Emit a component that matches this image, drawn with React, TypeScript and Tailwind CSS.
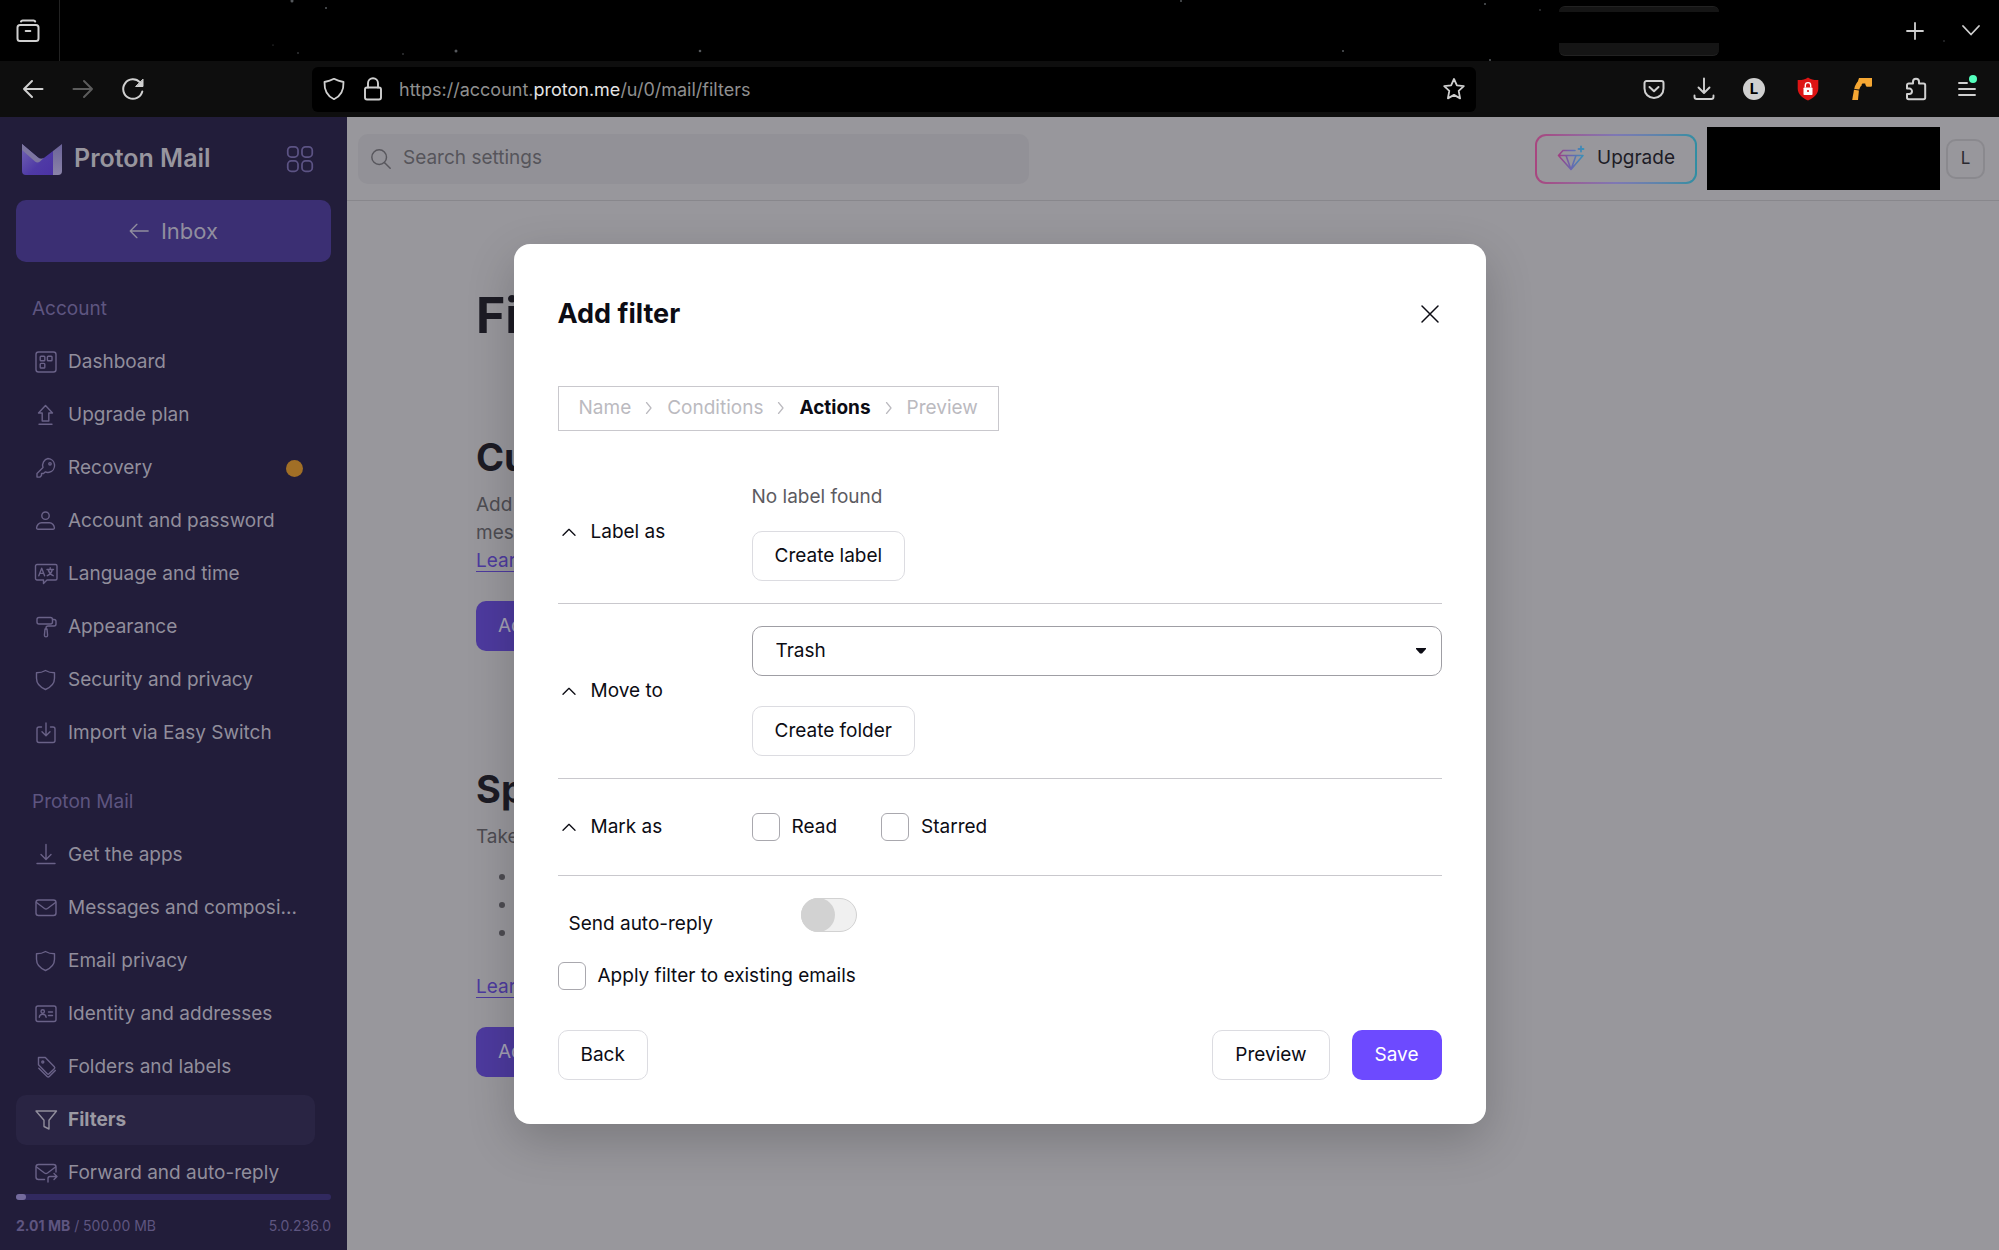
import { useState, type ReactNode } from 'react'

type IconProps = { children: ReactNode; className?: string }

// Every line icon is drawn on the same 24px grid
function Icon({ children, className = 'w-6 h-6' }: IconProps) {
  return (
    <svg
      className={`${className} shrink-0`}
      viewBox="0 0 24 24"
      fill="none"
      stroke="currentColor"
      strokeWidth="1.4"
      strokeLinecap="round"
      strokeLinejoin="round"
      aria-hidden="true"
    >
      {children}
    </svg>
  )
}

const icons: Record<string, ReactNode> = {
  dashboard: (
    <>
      <rect x="2" y="2" width="20" height="20" rx="2.5" />
      <rect x="6.2" y="6.2" width="4.6" height="4.6" rx=".8" />
      <rect x="13.4" y="6.2" width="4.6" height="4.6" rx=".8" />
      <rect x="6.2" y="13.4" width="4.6" height="4.6" rx=".8" />
    </>
  ),
  upgrade: <path d="M11.5 2.5L4.5 10h3.7v8h6.6v-8h3.7zM5 21.3h13" />,
  key: (
    <>
      <path d="M14 2.5a7 7 0 0 1 1.2 13.8c-1.4.3-2.8.1-4-.4L9.500 17.500H7.500v2l-1.500 1.600H3v-3.600l6-6A7 7 0 0 1 14 2.500z" />
      <circle cx="16" cy="7.8" r="1.2" />
    </>
  ),
  user: (
    <>
      <circle cx="11.5" cy="6.7" r="3.7" />
      <path d="M7.500 13.700h8c2.600 0 4.600 2.600 4.900 5 .1.900-.5 1.600-1.400 1.600H4c-.9 0-1.500-.7-1.400-1.600.3-2.400 2.300-5 4.900-5z" />
    </>
  ),
  language: (
    <>
      <path d="M3 2.500h18.500a1.500 1.500 0 0 1 1.500 1.500v12.500a1.500 1.500 0 0 1-1.500 1.500H13l-3.500 3.500V18H3a1.500 1.500 0 0 1-1.500-1.500V4A1.500 1.500 0 0 1 3 2.500z" />
      <path d="M4.800 13.800L7.700 6.200l2.900 7.600M5.800 11.400h3.800M13 7.500h6.500M16.200 5.800v1.700M18.300 7.500c-.6 3-2.300 5-5 6.200M14.200 7.500c.7 3 2.400 5 5 6.200" />
    </>
  ),
  roller: (
    <>
      <rect x="3" y="2.5" width="15.5" height="6.5" rx="2" />
      <path d="M18.500 4.500h1.500a2 2 0 0 1 2 2V9a2 2 0 0 1-2 2h-6a2 2 0 0 0-2 2v1" />
      <path d="M11 14h2l.6 6.300a1.600 1.600 0 0 1-3.200 0z" />
    </>
  ),
  shield: <path d="M11.500 2.500c2.800 1.700 5.800 2.300 9 2.300v5.500c0 5-3.700 9-9 11.200-5.300-2.200-9-6.200-9-11.200V4.800c3.200 0 6.200-.6 9-2.300z" />,
  importBox: <path d="M7.500 6H5a2 2 0 0 0-2 2v11.500a2 2 0 0 0 2 2h14a2 2 0 0 0 2-2V8a2 2 0 0 0-2-2h-2.500M12 2v12.500M8 10.800l4 4 4-4" />,
  download: <path d="M12 1.500v14.800M7 11.500l5 5 5-5M3 20.500h18" />,
  mail: (
    <>
      <rect x="2" y="4" width="20" height="15.5" rx="2.5" />
      <path d="M2.500 6.500l8 6c1 .7 2 .7 3 0l8-6" />
    </>
  ),
  idCard: (
    <>
      <rect x="2" y="4" width="20" height="15.5" rx="2" />
      <circle cx="8.7" cy="9.5" r="1.7" />
      <path d="M5.300 15.300c.2-2 1.500-3 3.400-3s3.200 1 3.400 3M14.500 10h4M14.500 13.500h4" />
    </>
  ),
  tags: (
    <>
      <path d="M4.500 2.500h6.800l9 9.300c.6.600.6 1.300 0 1.900l-5.200 5.100c-.6.600-1.300.6-1.900 0L4.500 9.800z" />
      <circle cx="8.8" cy="7" r="1" />
      <path d="M4.800 13.200l8.300 8.200c.7.700 1.500.7 2.200 0l6-6" />
    </>
  ),
  filter: <path d="M2 3h20.500L15 12.300V21l-5-2.500v-6.200z" />,
  forward: (
    <>
      <path d="M10.500 18.500h-6A2.500 2.500 0 0 1 2 16V6a2.500 2.500 0 0 1 2.500-2.500h15A2.500 2.500 0 0 1 22 6v5" />
      <path d="M2.500 6l8 6c1 .7 2 .7 3 0l8-6M14 21v-3.500a2 2 0 0 1 2-2h6.500M20 12.500l3 3-3 3" />
    </>
  ),
}

const accountLinks = [
  { icon: 'dashboard', label: 'Dashboard' },
  { icon: 'upgrade', label: 'Upgrade plan' },
  { icon: 'key', label: 'Recovery', warning: true },
  { icon: 'user', label: 'Account and password' },
  { icon: 'language', label: 'Language and time' },
  { icon: 'roller', label: 'Appearance' },
  { icon: 'shield', label: 'Security and privacy' },
  { icon: 'importBox', label: 'Import via Easy Switch' },
]

const mailLinks = [
  { icon: 'download', label: 'Get the apps' },
  { icon: 'mail', label: 'Messages and composi...' },
  { icon: 'shield', label: 'Email privacy' },
  { icon: 'idCard', label: 'Identity and addresses' },
  { icon: 'tags', label: 'Folders and labels' },
  { icon: 'filter', label: 'Filters', active: true },
  { icon: 'forward', label: 'Forward and auto-reply' },
]

function TabStrip() {
  return (
    <div className="relative flex h-[61px] items-center overflow-hidden bg-black text-[#d0d0d0]">
      {/* starry theme backdrop */}
      <svg className="absolute inset-0 h-full w-full" fill="#55585c" aria-hidden="true">
        <circle cx="292" cy="1" r="1.5" />
        <circle cx="326" cy="8" r="1" />
        <circle cx="456" cy="51" r="1.5" />
        <circle cx="298" cy="53" r=".8" />
        <circle cx="273" cy="45" r=".6" />
        <circle cx="403" cy="54" r=".8" />
        <circle cx="700" cy="51" r="1.3" />
        <circle cx="1181" cy="1" r="1" />
        <circle cx="1343" cy="51" r="1" />
        <circle cx="1485" cy="4" r="1" />
        <circle cx="1490" cy="60" r="1" />
        <circle cx="1540" cy="10" r=".8" />
        <circle cx="1944" cy="41" r=".7" />
      </svg>
      <div className="relative flex h-full w-[60px] items-center border-r border-[#222222]">
        <button type="button" aria-label="Tab overview" className="ml-4">
          <Icon>
            <g strokeWidth="2">
              <path d="M5 2.500c.3-.7.900-1 1.600-1h11c.7 0 1.300.3 1.600 1" />
              <rect x="1.5" y="6" width="21" height="16" rx="2.5" />
              <path d="M9.700 12h4.600" />
            </g>
          </Icon>
        </button>
      </div>
      <div className="relative mr-[184px] ml-auto flex h-[50px] w-40 flex-col justify-between">
        <div className="h-1.5 rounded-t-md border-t border-[#222222] bg-[#151515]" />
        <div className="h-[13px] rounded-b-md border-b border-[#222222] bg-[#151515]" />
      </div>
      <button type="button" aria-label="New tab" className="relative mr-8">
        <Icon><path strokeWidth="1.8" d="M12 4v16M4 12h16" /></Icon>
      </button>
      <button type="button" aria-label="List all tabs" className="relative mr-4">
        <Icon><path strokeWidth="1.8" d="M4 7l8 8.500L20 7" /></Icon>
      </button>
    </div>
  )
}

function BrowserBar() {
  const cell = 'flex h-full w-[50px] items-center justify-center'
  const wideCell = 'flex h-full w-[54px] items-center justify-center'
  return (
    <div className="flex h-14 items-center bg-[#0e0e0e] pr-2 pl-2 text-[#d0d0d0]">
      <button type="button" aria-label="Back" className={cell}>
        <Icon><path strokeWidth="2" d="M21.500 12H3M11 4l-8 8 8 8" /></Icon>
      </button>
      <button type="button" aria-label="Forward" className={`${cell} text-[#5c5c5c]`}>
        <Icon><path strokeWidth="2" d="M2.500 12H21M13 4l8 8-8 8" /></Icon>
      </button>
      <button type="button" aria-label="Reload" className={cell}>
        <Icon>
          <path strokeWidth="2" d="M21.300 14.500A9.700 9.700 0 1 1 19 5.400" />
          <path strokeWidth="1" fill="currentColor" d="M22 2.500v7h-7z" />
        </Icon>
      </button>
      <div className="ml-[154px] flex h-[45px] flex-1 items-center rounded-md bg-black pr-2.5 pl-2.5">
        <Icon>
          <path strokeWidth="1.8" d="M12 1.800c3 1.600 6 2.500 9.500 3.200.3 7.500-2.500 14-9.500 17.200C5 19 2.200 12.500 2.500 5 6 4.300 9 3.400 12 1.800z" />
        </Icon>
        <Icon className="ml-[15px] w-6 h-6">
          <g strokeWidth="1.9">
            <rect x="4" y="10.5" width="16" height="12" rx="2" />
            <path d="M7 10.500V6.200a5 5 0 0 1 10 0v4.300" />
          </g>
        </Icon>
        <p className="ml-3.5 flex-1 text-[18px] text-[#8f8f8f]">
          https://account.<span className="text-[#e4e4e4]">proton.me</span>/u/0/mail/filters
        </p>
        <button type="button" aria-label="Bookmark this page">
          <Icon>
            <path strokeWidth="1.8" d="M12 2l2.900 6.300 6.900.8-5.100 4.700 1.400 7.600-6.100-3.500-6.100 3.500 1.400-7.600-5.100-4.700 6.900-.8z" />
          </Icon>
        </button>
      </div>
      <div className="ml-[153px] flex h-full">
        <button type="button" aria-label="Save to Pocket" className={cell}>
          <Icon>
            <path strokeWidth="2" d="M4.500 4h15a2 2 0 0 1 2 2v5.500a9.500 9.500 0 0 1-19 0V6a2 2 0 0 1 2-2z" />
            <path strokeWidth="2" d="M7.500 10l4.500 4.300 4.500-4.300" />
          </Icon>
        </button>
        <button type="button" aria-label="Downloads" className={cell}>
          <Icon><path strokeWidth="1.9" d="M12 1.500v14M6.500 10.500l5.500 5.500 5.500-5.500M2.500 18.500v1.200c0 1.300.9 2.300 2.200 2.300h14.600c1.300 0 2.200-1 2.200-2.300v-1.200" /></Icon>
        </button>
        <button type="button" aria-label="Account" className={cell}>
          <span className="flex h-[22px] w-[22px] items-center justify-center rounded-full bg-[#cfcfcf] text-[15px] font-bold text-black">L</span>
        </button>
        <div className="flex h-full pl-0.5">
          <button type="button" aria-label="Password manager" className={wideCell}>
            <svg className="h-6 w-6" viewBox="0 0 24 24" aria-hidden="true">
              <path fill="#dd1414" d="M12 .5c3 2 6.500 2.700 10.300 2.500v8.500c0 5.500-4.300 9.300-10.300 12-6-2.700-10.300-6.500-10.300-12V3C5.500 3.200 9 2.500 12 .5z" />
              <rect x="7.5" y="10.5" width="9" height="7.5" rx=".8" fill="#fff" />
              <path d="M9.300 10.500V8.300a2.700 2.700 0 0 1 5.400 0v2.200" fill="none" stroke="#fff" strokeWidth="1.4" />
              <circle cx="12" cy="14" r="1.1" fill="#dd1414" />
            </svg>
          </button>
          <button type="button" aria-label="Extension" className={wideCell}>
            <svg className="h-6 w-6" viewBox="0 0 24 24" fill="#f5a733" aria-hidden="true">
              <path d="M9 1h13v7.500c0 .8-.6 1.300-1.400 1.300h-4L15.500 8l-.3-1.400h-2.700c-.8 1.300-1.800 2-3.200 2.400L7 7z" />
              <path d="M8 4.500l4 3.500c-1.400 1.200-2.200 2.700-2.700 4.500L4.300 12c.4-3 1.700-5.500 3.700-7.500z" />
              <path d="M4 12.700l4.900.7-.9 9.600H2.200z" />
            </svg>
          </button>
          <button type="button" aria-label="Extensions" className={wideCell}>
            <Icon>
              <path strokeWidth="2" d="M9 6.500V4.800a3 3 0 0 1 6 0v1.700h4.500a1.700 1.700 0 0 1 1.700 1.700v12.300a1.700 1.700 0 0 1-1.700 1.700H4.700A1.700 1.700 0 0 1 3 20.500V17h2.300a2.700 2.700 0 0 0 0-5.400H3V8.200a1.700 1.700 0 0 1 1.700-1.700z" />
            </Icon>
          </button>
        </div>
        <button type="button" aria-label="Application menu" className="flex h-full w-12 items-center justify-center">
          <span className="relative">
            <Icon><path strokeWidth="1.9" d="M4 6h8M4 12h16M4 18h16" /></Icon>
            <span className="absolute -top-0.5 right-0.5 h-2 w-2 rounded-full bg-[#54ffbd]" />
          </span>
        </button>
      </div>
    </div>
  )
}

type NavItem = { icon: string; label: string; warning?: boolean; active?: boolean }

function NavSection({ title, items }: { title: string; items: NavItem[] }) {
  return (
    <section className="flex flex-col gap-[3px]">
      <h2 className="flex h-[50px] items-center pl-4 text-[19px] text-[#5e5580]">{title}</h2>
      {items.map((item) => (
        <a
          key={item.label}
          href="#"
          className={`flex h-[50px] items-center gap-2.5 rounded-[10px] pr-3 pl-[18px] text-[19px] ${
            item.active ? 'bg-[#292443] font-bold text-[#9b99a2]' : 'text-[#918e9c]'
          }`}
        >
          <span className={item.active ? 'text-[#918e9c]' : 'text-[#6a6288]'}>
            <Icon>{icons[item.icon]}</Icon>
          </span>
          <span className="flex-1 whitespace-nowrap">{item.label}</span>
          {item.warning && <span className="h-[17px] w-[17px] rounded-full bg-[#a16f26]" />}
        </a>
      ))}
    </section>
  )
}

function Sidebar() {
  return (
    <aside className="flex w-[347px] shrink-0 flex-col bg-[#221d3a] pr-4 pl-4">
      <div className="flex h-[83px] shrink-0 items-center pr-[17px] pl-[6px]">
        <svg className="h-8 w-10" viewBox="0 0 40 32" aria-hidden="true">
          <defs>
            <linearGradient id="mailBody" x1="0" y1="0" x2="1" y2="1">
              <stop offset="0" stopColor="#7466b4" />
              <stop offset=".6" stopColor="#4f3aa6" />
              <stop offset="1" stopColor="#4b32a4" />
            </linearGradient>
            <linearGradient id="mailFlap" x1="0" y1="0" x2="0" y2="1">
              <stop offset="0" stopColor="#6b6399" />
              <stop offset="1" stopColor="#8a83a8" />
            </linearGradient>
          </defs>
          <path d="M0 1l16 13.500c2 1.700 4.500 1.700 6.500 0L31 8v24H4a4 4 0 0 1-4-4z" fill="url(#mailBody)" />
          <path d="M31 8l9-7v27a4 4 0 0 1-4 4h-5z" fill="url(#mailFlap)" />
          <path d="M0 1l16 13.500c2 1.700 4 1.700 6 .3L18 18.500c-1.500 1.300-3.500 1.300-5 0L0 7z" fill="#7d76a0" />
        </svg>
        <p className="ml-3 text-[25px] font-semibold text-[#97959e]">Proton Mail</p>
        <button type="button" aria-label="Proton applications" className="ml-auto text-[#5c5384]">
          <Icon className="w-7 h-7">
            <g strokeWidth="1.5">
              <rect x="1.5" y="1.5" width="8.8" height="8.8" rx="3" />
              <rect x="13.7" y="1.5" width="8.8" height="8.8" rx="3" />
              <rect x="1.5" y="13.7" width="8.8" height="8.8" rx="3" />
              <rect x="13.7" y="13.7" width="8.8" height="8.8" rx="3" />
            </g>
          </Icon>
        </button>
      </div>
      <button type="button" className="flex h-[62px] shrink-0 items-center justify-center gap-3 rounded-[10px] bg-[#3b2f73] text-[22px] text-[#918e9f]">
        <Icon className="w-5 h-5"><path strokeWidth="1.6" d="M23 12H1.500M9.500 4l-8 8 8 8" /></Icon>
        Inbox
      </button>
      <nav className="mt-[22px] mr-4 flex min-h-0 flex-1 flex-col gap-[19px] overflow-hidden">
        <NavSection title="Account" items={accountLinks} />
        <NavSection title="Proton Mail" items={mailLinks} />
      </nav>
      <div className="mt-2.5 h-1.5 shrink-0 rounded-full bg-[#31295f]">
        <div className="h-full w-2.5 rounded-full bg-[#746b9d]" />
      </div>
      <div className="flex h-[50px] shrink-0 items-center justify-between text-[14px] text-[#5e5580]">
        <span><b>2.01 MB</b> / 500.00 MB</span>
        <span>5.0.236.0</span>
      </div>
    </aside>
  )
}

function TopBar() {
  return (
    <header className="flex h-[84px] shrink-0 items-center border-b border-[#88878c] pr-3.5 pl-[11px]">
      <label className="flex h-[50px] w-[671px] items-center gap-[11px] rounded-[10px] bg-[#929197] pl-3 text-[#58575d]">
        <Icon className="w-[22px] h-[22px]">
          <circle cx="10" cy="10" r="8" strokeWidth="1.6" />
          <path strokeWidth="1.6" d="M16 16l6 6" />
        </Icon>
        <input
          type="search"
          aria-label="Search settings"
          placeholder="Search settings"
          className="flex-1 bg-transparent text-[19px] placeholder:text-[#56555b] focus:outline-none"
        />
      </label>
      <button type="button" className="ml-auto h-[50px] rounded-[11px] bg-linear-to-r from-[#a8467f] via-[#7e78b4] to-[#2f8ea3] p-0.5 text-[19px] text-[#1d1c26]">
        <span className="flex h-full items-center gap-3 rounded-[9px] bg-[#98979c] pr-5 pl-5">
          <svg className="h-7 w-7" viewBox="0 0 28 28" fill="none" stroke="url(#gem)" strokeWidth="1.6" strokeLinejoin="round" strokeLinecap="round" aria-hidden="true">
            <defs>
              <linearGradient id="gem" x1="0" y1="0" x2="28" y2="0" gradientUnits="userSpaceOnUse">
                <stop offset="0" stopColor="#a8397c" />
                <stop offset=".5" stopColor="#6a66b0" />
                <stop offset="1" stopColor="#3296b8" />
              </linearGradient>
            </defs>
            <path d="M18 5.500H6l-4.500 5L14 24.500l12-14H1.500M9 10.500l5 14 5-14" />
            <path d="M24 1.500v5M21.500 4h5" strokeWidth="1.8" />
          </svg>
          Upgrade
        </span>
      </button>
      <div className="ml-2.5 h-[63px] w-[233px] bg-black" />
      <button type="button" className="ml-1.5 h-10 w-[39px] rounded-[10px] border-2 border-[#8a898e] text-[17px] text-[#2a2930]">
        L
      </button>
    </header>
  )
}

function SettingsPage() {
  const action = 'mt-[26px] h-[50px] rounded-[10px] bg-[#4d3a9e] px-[22px] text-[19px] text-[#a3a0b4]'
  const link = 'text-[#4d3a9e] underline underline-offset-4'
  return (
    <main className="max-w-[900px] pt-[84px] pl-[129px] text-[19px] leading-7 text-[#4d4c52]">
      <h1 className="text-[50px] leading-[60px] font-bold text-[#1c1b24]">Filters</h1>
      <section className="mt-[90px]">
        <h2 className="text-[38px] leading-[44px] font-bold text-[#1c1b24]">Custom filters</h2>
        <p className="mt-3">
          Add a custom filter to perform actions such as automatically labeling or archiving
          messages.
        </p>
        <a href="#" className={link}>Learn more</a>
        <div>
          <button type="button" className={action}>Add filter</button>
        </div>
      </section>
      <section className="mt-[116px]">
        <h2 className="text-[38px] leading-[44px] font-bold text-[#1c1b24]">Spam, block, and allow lists</h2>
        <p className="mt-3">Take control over what lands in your inbox by creating the following lists:</p>
        <ul className="mt-3 mb-[26px] list-disc pl-[42px]">
          <li>Spam: To prevent junk mail from clogging up your inbox</li>
          <li>Block: To stop emails from entering your email system</li>
          <li>Allow: To ensure critical messages don't end up in spam</li>
        </ul>
        <a href="#" className={link}>Learn more</a>
        <div>
          <button type="button" className={action}>Add address or domain</button>
        </div>
      </section>
    </main>
  )
}

const outlineButton = 'h-[50px] rounded-[10px] border border-[#dcdce1] px-[22px] text-[#0c0c14]'

function Checkbox({ label }: { label: string }) {
  return (
    <label className="flex items-center gap-3">
      <input type="checkbox" className="h-7 w-7 appearance-none rounded-md border border-[#a9a8ae] bg-white checked:bg-[#6d4aff]" />
      {label}
    </label>
  )
}

function ActionRow({ title, children }: { title: string; children: ReactNode }) {
  return (
    <div className="flex items-center border-b border-[#c9c8cd] pt-[22px] pb-[22px]">
      <button type="button" aria-expanded="true" className="flex w-[194px] shrink-0 items-center gap-3.5 pl-[3px]">
        <Icon className="w-4 h-4"><path strokeWidth="2" d="M3 17l9-9 9 9" /></Icon>
        {title}
      </button>
      <div className="flex-1">{children}</div>
    </div>
  )
}

const steps = ['Name', 'Conditions', 'Actions', 'Preview']

function FilterModal() {
  const [folder, setFolder] = useState('Trash')
  return (
    <div
      role="dialog"
      aria-labelledby="filter-title"
      className="w-[972px] rounded-2xl bg-white p-11 text-[19px] leading-7 text-[#0c0c14] shadow-[0_16px_48px_rgba(0,0,0,0.2)]"
    >
      <div className="flex h-[52px] items-center justify-between">
        <h2 id="filter-title" className="text-[27px] font-bold">Add filter</h2>
        <button type="button" aria-label="Close">
          <Icon><path strokeWidth="1.5" d="M4 4l16 16M20 4L4 20" /></Icon>
        </button>
      </div>

      <ol className="mt-[46px] flex h-[45px] w-fit items-center gap-3 border border-[#c9c8cd] px-5">
        {steps.map((step, i) => (
          <li key={step} className={`flex items-center gap-3 ${step === 'Actions' ? 'font-bold' : 'text-[#bbbabf]'}`}>
            {i > 0 && (
              <span className="text-[#bbbabf]">
                <Icon className="w-3 h-3"><path strokeWidth="2.4" d="M7 1l9 11-9 11" /></Icon>
              </span>
            )}
            {step}
          </li>
        ))}
      </ol>

      <div className="mt-[30px]">
        <ActionRow title="Label as">
          <p className="text-[#5c5b61]">No label found</p>
          <button type="button" className={`${outlineButton} mt-5`}>Create label</button>
        </ActionRow>
        <ActionRow title="Move to">
          <div className="relative">
            <select
              aria-label="Move to"
              value={folder}
              onChange={(e) => setFolder(e.target.value)}
              className="h-[50px] w-full appearance-none rounded-[10px] border border-[#9f9ea4] bg-white pr-10 pl-[23px]"
            >
              <option>Trash</option>
              <option>Archive</option>
              <option>Spam</option>
            </select>
            <svg className="pointer-events-none absolute top-[22px] right-4 h-1.5 w-2.5" viewBox="0 0 10 6" aria-hidden="true">
              <path d="M0 0h10v1L6 5.500H4L0 1z" fill="#0c0c14" />
            </svg>
          </div>
          <button type="button" className={`${outlineButton} mt-[30px]`}>Create folder</button>
        </ActionRow>
        <ActionRow title="Mark as">
          <div className="flex h-[52px] items-center gap-11">
            <Checkbox label="Read" />
            <Checkbox label="Starred" />
          </div>
        </ActionRow>
        <div className="flex items-start pt-[22px]">
          <label htmlFor="auto-reply" className="w-[194px] pt-3 pl-[11px]">Send auto-reply</label>
          <input
            id="auto-reply"
            type="checkbox"
            disabled
            className="ml-[49px] h-[34px] w-14 appearance-none rounded-full border border-[#d2d2d2] bg-[#f0f0f0] before:-mt-px before:-ml-px before:block before:h-[34px] before:w-[34px] before:rounded-full before:bg-[#d2d2d2] before:content-['']"
          />
        </div>
      </div>

      <div className="mt-6 flex">
        <Checkbox label="Apply filter to existing emails" />
      </div>

      <div className="mt-10 flex gap-[22px]">
        <button type="button" className={outlineButton}>Back</button>
        <button type="button" className={`${outlineButton} ml-auto`}>Preview</button>
        <button type="button" className="h-[50px] rounded-[10px] bg-[#6d4aff] px-[23px] text-white">Save</button>
      </div>
    </div>
  )
}

export default function App() {
  return (
    <div className="flex h-screen flex-col overflow-hidden font-[Inter,sans-serif]">
      <TabStrip />
      <BrowserBar />
      <div className="relative flex min-h-0 flex-1">
        <Sidebar />
        <div className="flex min-w-0 flex-1 flex-col bg-[#98979c]">
          <TopBar />
          <SettingsPage />
        </div>
        <div className="absolute inset-0 flex items-center justify-center">
          <FilterModal />
        </div>
      </div>
    </div>
  )
}
